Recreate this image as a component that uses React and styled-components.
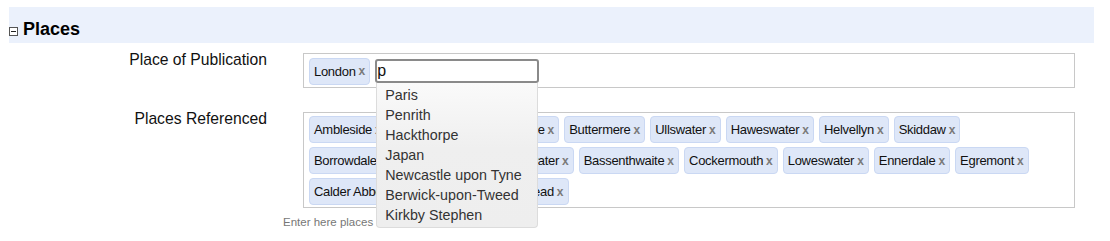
import React from "react";
import styled, { createGlobalStyle } from "styled-components";

const Global = createGlobalStyle`
  html, body { margin: 0; padding: 0; background: #fff; }
  body { font-family: "Liberation Sans", Arial, sans-serif; color: #111; }
`;

const Page = styled.div`
  padding: 7px 16px 0 9px;
`;

const SectionHeader = styled.div`
  height: 36px;
  box-sizing: border-box;
  padding-top: 12px;
  background: #ebf1fc;
  display: flex;
  align-items: flex-start;
  gap: 5px;
`;

const Toggle = styled.svg`
  width: 9px;
  height: 9px;
  margin-top: 8px;
  flex: none;
`;

const Title = styled.h2`
  margin: 0;
  font-size: 18px;
  line-height: 21px;
  font-weight: bold;
  color: #000;
`;

const Form = styled.div`
  display: grid;
  grid-template-columns: 258px 772px;
  column-gap: 36px;
  margin-top: 10px;
`;

const Label = styled.div`
  text-align: right;
  font-size: 15.7px;
  line-height: 18px;
  color: #111;
  margin-top: ${(p) => p.$top || 0}px;
`;

const Field = styled.div`
  border: 1px solid #c8c8c8;
  box-sizing: border-box;
  padding: 3px 38px 2px 5px;
  margin-top: ${(p) => p.$top || 0}px;
  display: flex;
  flex-wrap: wrap;
  align-items: center;
  gap: 4px 5px;
  min-height: 35px;
`;

const Chip = styled.span`
  display: inline-flex;
  align-items: center;
  height: 27px;
  box-sizing: border-box;
  padding: 0 4px 0 4px;
  background: #dee7f8;
  border: 1px solid #cad8f3;
  border-radius: 4px;
  font-size: 13px;
  letter-spacing: -0.3px;
  color: #111;
  white-space: nowrap;
`;

const Remove = styled.span`
  margin-left: 3px;
  color: #7a7a7a;
  font-weight: bold;
  font-size: 12px;
  letter-spacing: 0;
`;

const InputWrap = styled.div`
  position: relative;
  width: 164px;
  height: 24px;
`;

const Input = styled.div`
  box-sizing: border-box;
  width: 100%;
  height: 24px;
  border: 2px solid #8a8a8a;
  border-radius: 3px;
  font-size: 16px;
  line-height: 20px;
  padding-left: 0;
  color: #111;
  background: #fff;
`;

const Menu = styled.ul`
  position: absolute;
  top: 24px;
  left: 1px;
  right: 1px;
  margin: 0;
  padding: 2px 0 2px;
  list-style: none;
  background: linear-gradient(to bottom, #fafafa 0%, #efefef 45%, #eeeeee 100%);
  border: 1px solid #dcdcdc;
  border-top: none;
  border-radius: 0 0 4px 4px;
  z-index: 10;
`;

const MenuItem = styled.li`
  font-size: 14.3px;
  line-height: 20px;
  padding-left: 8px;
  color: #333;
  white-space: nowrap;
`;

const Help = styled.div`
  grid-column: 1 / -1;
  padding-left: 274px;
  margin-top: 8px;
  font-size: 11.5px;
  color: #777;
`;

const referenced = [
  "Ambleside", "Grasmere", "Windermere", "Buttermere", "Ullswater", "Haweswater", "Helvellyn", "Skiddaw",
  "Borrowdale", "Patterdale", "Derwentwater", "Bassenthwaite", "Cockermouth", "Loweswater", "Ennerdale", "Egremont",
  "Calder Abbey", "Threlkeld", "Hawkshead",
];

const suggestions = ["Paris", "Penrith", "Hackthorpe", "Japan", "Newcastle upon Tyne", "Berwick-upon-Tweed", "Kirkby Stephen"];

const Token = ({ children }) => (
  <Chip>
    {children}
    <Remove>x</Remove>
  </Chip>
);

export default function App() {
  return (
    <>
      <Global />
      <Page>
        <SectionHeader>
          <Toggle viewBox="0 0 9 9">
            <rect x="0.5" y="0.5" width="8" height="8" fill="#fff" stroke="#555" />
            <line x1="2" y1="4.5" x2="7" y2="4.5" stroke="#222" />
          </Toggle>
          <Title>Places</Title>
        </SectionHeader>
        <Form>
          <Label $top={-2}>Place of Publication</Label>
          <Field>
            <Token>London</Token>
            <InputWrap>
              <Input>p</Input>
              <Menu>
                {suggestions.map((s) => (
                  <MenuItem key={s}>{s}</MenuItem>
                ))}
              </Menu>
            </InputWrap>
          </Field>
          <Label $top={22}>Places Referenced</Label>
          <Field $top={24}>
            {referenced.map((r) => (
              <Token key={r}>{r}</Token>
            ))}
          </Field>
          <Help>Enter here places referenced in the text</Help>
        </Form>
      </Page>
    </>
  );
}
